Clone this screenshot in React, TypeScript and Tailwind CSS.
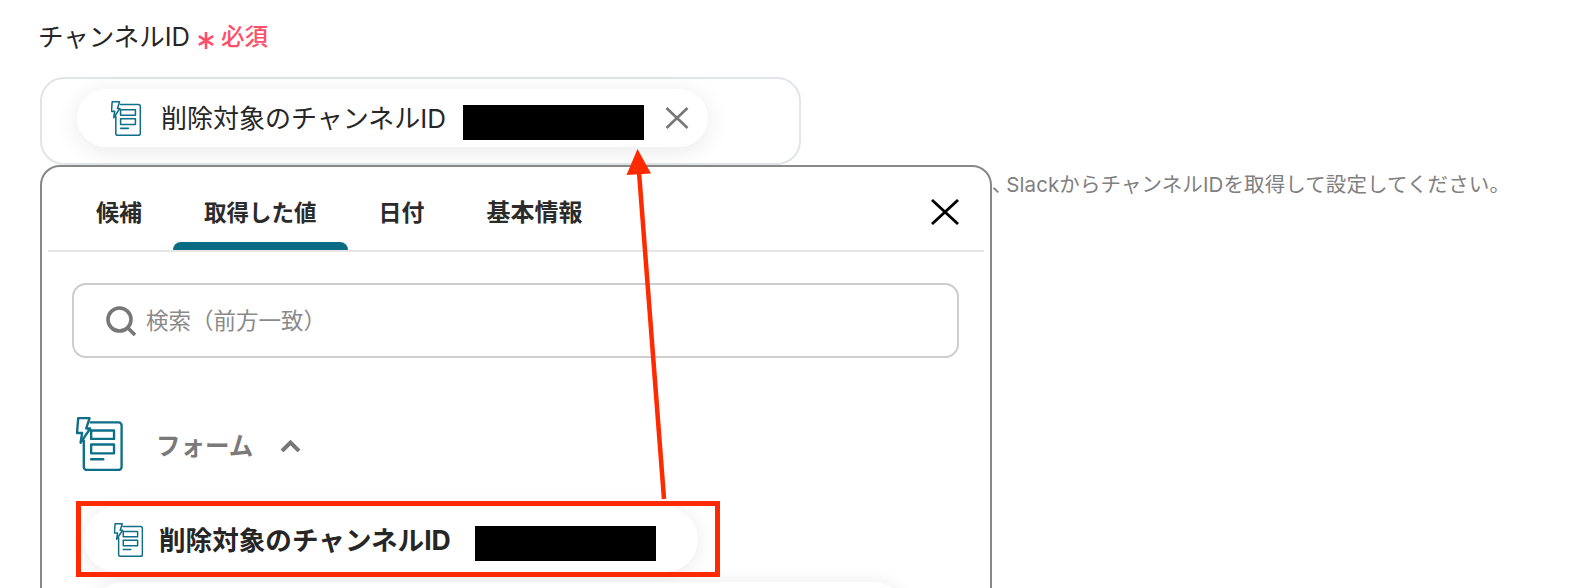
const font = { fontFamily: '"Inter","Noto Sans CJK JP",sans-serif' };

function FormIcon({ className }: { className: string }) {
  return (
    <svg viewBox="0 0 47 55" fill="none" stroke="#0f6e88" strokeWidth="2.4" strokeLinejoin="round" strokeLinecap="round" className={className}>
      <path d="M14.5 5.5H43a3 3 0 0 1 3 3V51a3 3 0 0 1-3 3H10.5a3 3 0 0 1-3-3V24" />
      <path d="M1.8 1.2H13.4L10 11.7H14L4.2 26.3L5.8 16.3H.6Z" />
      <rect x="15" y="13.7" width="23.3" height="8.6" />
      <rect x="15" y="28" width="23.3" height="9" />
      <path d="M15 43H27.3" />
    </svg>
  );
}

const tabs = [
  { label: "候補", size: "text-[23px]" },
  { label: "取得した値", size: "text-[22.5px]" },
  { label: "日付", size: "text-[23px]" },
  { label: "基本情報", size: "text-[24px]" },
];

export default function App() {
  return (
    <div className="relative h-[588px] w-[1592px] overflow-hidden bg-white pl-[40px] pt-[20px]" style={font}>
      <div className="flex h-[34px] items-center">
        <span className="-ml-[2px] text-[25.5px] leading-[34px] text-[#262626]">チャンネルID</span>
        <svg viewBox="0 0 16 17" fill="none" stroke="#ff4f68" strokeWidth="2.6" className="ml-[8px] mt-[7px] h-[17px] w-[16px] shrink-0">
          <path d="M8 0V17M.8 4.2L15.2 12.8M15.2 4.2L.8 12.8" />
        </svg>
        <span className="ml-[7px] text-[23.5px] font-medium leading-[34px] text-[#ff4f68]">必須</span>
      </div>

      <div className="mt-[23px] h-[88px] w-[761px] rounded-[24px] border-2 border-[#e1e4e9] pt-[10px] pl-[35px]">
        <div className="flex h-[58px] w-[631px] items-center rounded-full bg-white pl-[34px] shadow-[0_4px_24px_rgba(0,0,0,0.09)]">
          <FormIcon className="h-[35px] w-[30px] shrink-0" />
          <span className="ml-[20px] whitespace-nowrap text-[26px] text-[#262626]">削除対象のチャンネルID</span>
          <span className="ml-[17px] mt-[8px] h-[35px] w-[181px] shrink-0 bg-black" />
          <svg viewBox="0 0 24 22" fill="none" stroke="#777" strokeWidth="2.6" className="ml-[21px] h-[22px] w-[24px] shrink-0">
            <path d="M1.5 1L22.5 21M22.5 1L1.5 21" />
          </svg>
        </div>
      </div>

      <p className="mt-[6px] w-[1470px] whitespace-nowrap text-right text-[20.5px] leading-[28px] tracking-[0.1px] text-[#808080]">
        チャンネルIDは<span className="-mr-[6px]">、</span>SlackからチャンネルIDを取得して設定してください。
      </p>

      <div className="absolute left-[40px] top-[165px] h-[460px] w-[952px] rounded-[20px] border-2 border-[#888] bg-white">
        <div className="mx-[6px] flex h-[85px] items-stretch border-b-2 border-[#e6e6e6] pl-[17px]">
          {tabs.map((t, i) => (
            <div key={t.label} className={`relative flex items-center px-[31px] pt-[9px] font-bold text-[#2b2b2b] ${t.size}`}>
              {t.label}
              {i === 1 && <div className="absolute bottom-0 left-0 right-0 h-[8px] rounded-t-[8px] bg-[#0b6b85]" />}
            </div>
          ))}
          <svg viewBox="0 0 28 26" fill="none" stroke="#000" strokeWidth="2.8" className="ml-auto mr-[25px] mt-[32px] h-[26px] w-[28px]">
            <path d="M1 1L27 25M27 1L1 25" />
          </svg>
        </div>

        <div className="mx-[30px] mt-[31px] flex h-[75px] w-[887px] items-center rounded-[14px] border-2 border-[#cdcdcd] pl-[32px]">
          <svg viewBox="0 0 30 30" fill="none" stroke="#777" strokeWidth="3.6" className="h-[30px] w-[30px] shrink-0">
            <circle cx="13.5" cy="13.5" r="11.5" />
            <path d="M21.5 21.5L29 29" />
          </svg>
          <span className="ml-[10px] text-[22.5px] text-[#8a8a8a]">検索（前方一致）</span>
        </div>

        <div className="ml-[34px] mt-[59px] flex h-[54px] items-center">
          <FormIcon className="h-[54px] w-[47px] shrink-0" />
          <span className="ml-[33px] mt-[4px] text-[24.5px] font-semibold text-[#7a7a7a]">フォーム</span>
          <svg viewBox="0 0 21 12" fill="none" stroke="#777" strokeWidth="4" className="ml-[27px] mt-[4px] h-[12px] w-[21px]">
            <path d="M2 11L10.5 2.5L19 11" />
          </svg>
        </div>

        <div className="ml-[42px] mt-[36px] flex h-[65px] w-[614px] items-center rounded-full bg-white pl-[30px] shadow-[0_2px_20px_rgba(0,0,0,0.09)]">
          <FormIcon className="h-[34px] w-[29px] shrink-0" />
          <span className="ml-[16px] mt-[2px] whitespace-nowrap text-[26.6px] font-bold text-[#262626]">削除対象のチャンネルID</span>
          <span className="ml-[24px] mt-[8px] h-[35px] w-[181px] shrink-0 bg-black" />
        </div>

        <div className="ml-[49px] mt-[10px] h-[65px] w-[815px] rounded-[32px] bg-white shadow-[0_2px_20px_rgba(0,0,0,0.09)]" />
      </div>

      <div className="absolute left-[76px] top-[501px] h-[76px] w-[644px] border-[5px] border-[#ff2a00]" />

      <svg className="absolute left-0 top-0 h-[588px] w-[1592px]" viewBox="0 0 1592 588" fill="none">
        <path d="M664 499L639 172" stroke="#ff2a00" strokeWidth="4.5" />
        <path d="M637.5 149L651 173.5L626.5 175Z" fill="#ff2a00" />
      </svg>
    </div>
  );
}
